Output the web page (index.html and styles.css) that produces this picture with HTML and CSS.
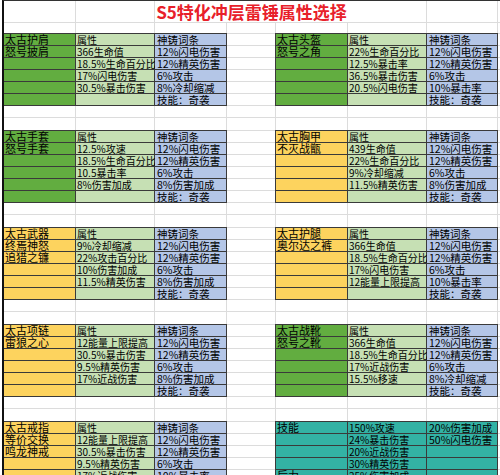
FILE: index.html
```html
<!DOCTYPE html>
<html lang="zh">
<head>
<meta charset="utf-8">
<title>S5特化冲层雷锤属性选择</title>
<link rel="stylesheet" href="styles.css">
</head>
<body>
<div class="sheet">
  <div class="row-title"><div class="title">S5特化冲层雷锤属性选择</div></div>
  <div class="row-blank"></div>

  <div class="band">
    <div class="blk">
      <div class="c a g">太古护肩</div><div class="c b">属性</div><div class="c d">神铸词条</div>
      <div class="c a g">怒号披肩</div><div class="c b">366生命值</div><div class="c d">12%闪电伤害</div>
      <div class="c a g"></div><div class="c b">18.5%生命百分比</div><div class="c d">12%精英伤害</div>
      <div class="c a g"></div><div class="c b">17%闪电伤害</div><div class="c d">6%攻击</div>
      <div class="c a g"></div><div class="c b">30.5%暴击伤害</div><div class="c d">8%冷却缩减</div>
      <div class="c a g"></div><div class="c b"></div><div class="c d">技能：奇袭</div>
    </div>
    <div class="blk right">
      <div class="c a g">太古头盔</div><div class="c b">属性</div><div class="c d">神铸词条</div>
      <div class="c a g">怒号之角</div><div class="c b">22%生命百分比</div><div class="c d">12%闪电伤害</div>
      <div class="c a g"></div><div class="c b">12.5%暴击率</div><div class="c d">12%精英伤害</div>
      <div class="c a g"></div><div class="c b">36.5%暴击伤害</div><div class="c d">6%攻击</div>
      <div class="c a g"></div><div class="c b">20.5%闪电伤害</div><div class="c d">10%暴击率</div>
      <div class="c a g"></div><div class="c b"></div><div class="c d">技能：奇袭</div>
    </div>
  </div>

  <div class="band">
    <div class="blk">
      <div class="c a g">太古手套</div><div class="c b">属性</div><div class="c d">神铸词条</div>
      <div class="c a g">怒号手套</div><div class="c b">12.5%攻速</div><div class="c d">12%闪电伤害</div>
      <div class="c a g"></div><div class="c b">18.5%生命百分比</div><div class="c d">12%精英伤害</div>
      <div class="c a g"></div><div class="c b">10.5暴击率</div><div class="c d">6%攻击</div>
      <div class="c a g"></div><div class="c b">8%伤害加成</div><div class="c d">8%伤害加成</div>
      <div class="c a g"></div><div class="c b"></div><div class="c d">技能：奇袭</div>
    </div>
    <div class="blk right">
      <div class="c a o">太古胸甲</div><div class="c b">属性</div><div class="c d">神铸词条</div>
      <div class="c a o">不灭战甑</div><div class="c b">439生命值</div><div class="c d">12%闪电伤害</div>
      <div class="c a o"></div><div class="c b">22%生命百分比</div><div class="c d">12%精英伤害</div>
      <div class="c a o"></div><div class="c b">9%冷却缩减</div><div class="c d">6%攻击</div>
      <div class="c a o"></div><div class="c b">11.5%精英伤害</div><div class="c d">8%伤害加成</div>
      <div class="c a o"></div><div class="c b"></div><div class="c d">技能：奇袭</div>
    </div>
  </div>

  <div class="band">
    <div class="blk">
      <div class="c a o">太古武器</div><div class="c b">属性</div><div class="c d">神铸词条</div>
      <div class="c a o">终焉神怒</div><div class="c b">9%冷却缩减</div><div class="c d">12%闪电伤害</div>
      <div class="c a o">追猎之镰</div><div class="c b">22%攻击百分比</div><div class="c d">12%精英伤害</div>
      <div class="c a o"></div><div class="c b">10%伤害加成</div><div class="c d">6%攻击</div>
      <div class="c a o"></div><div class="c b">11.5%精英伤害</div><div class="c d">8%伤害加成</div>
      <div class="c a o"></div><div class="c b"></div><div class="c d">技能：奇袭</div>
    </div>
    <div class="blk right">
      <div class="c a o">太古护腿</div><div class="c b">属性</div><div class="c d">神铸词条</div>
      <div class="c a o">奥尔达之裤</div><div class="c b">366生命值</div><div class="c d">12%闪电伤害</div>
      <div class="c a o"></div><div class="c b">18.5%生命百分比</div><div class="c d">12%精英伤害</div>
      <div class="c a o"></div><div class="c b">17%闪电伤害</div><div class="c d">6%攻击</div>
      <div class="c a o"></div><div class="c b">12能量上限提高</div><div class="c d">10%暴击率</div>
      <div class="c a o"></div><div class="c b"></div><div class="c d">技能：奇袭</div>
    </div>
  </div>

  <div class="band">
    <div class="blk">
      <div class="c a o">太古项链</div><div class="c b">属性</div><div class="c d">神铸词条</div>
      <div class="c a o">雷狼之心</div><div class="c b">12能量上限提高</div><div class="c d">12%闪电伤害</div>
      <div class="c a o"></div><div class="c b">30.5%暴击伤害</div><div class="c d">12%精英伤害</div>
      <div class="c a o"></div><div class="c b">9.5%精英伤害</div><div class="c d">6%攻击</div>
      <div class="c a o"></div><div class="c b">17%近战伤害</div><div class="c d">8%伤害加成</div>
      <div class="c a o"></div><div class="c b"></div><div class="c d">技能：奇袭</div>
    </div>
    <div class="blk right">
      <div class="c a g">太古战靴</div><div class="c b">属性</div><div class="c d">神铸词条</div>
      <div class="c a g">怒号之靴</div><div class="c b">366生命值</div><div class="c d">12%闪电伤害</div>
      <div class="c a g"></div><div class="c b">18.5%生命百分比</div><div class="c d">12%精英伤害</div>
      <div class="c a g"></div><div class="c b">17%近战伤害</div><div class="c d">6%攻击</div>
      <div class="c a g"></div><div class="c b">15.5%移速</div><div class="c d">8%冷却缩减</div>
      <div class="c a g"></div><div class="c b"></div><div class="c d">技能：奇袭</div>
    </div>
  </div>

  <div class="band">
    <div class="blk">
      <div class="c a o">太古戒指</div><div class="c b">属性</div><div class="c d">神铸词条</div>
      <div class="c a o">等价交换</div><div class="c b">12能量上限提高</div><div class="c d">12%闪电伤害</div>
      <div class="c a o">鸣龙神戒</div><div class="c b">30.5%暴击伤害</div><div class="c d">12%精英伤害</div>
      <div class="c a o"></div><div class="c b">9.5%精英伤害</div><div class="c d">6%攻击</div>
      <div class="c a o"></div><div class="c b">17%近战伤害</div><div class="c d">10%暴击率</div>
      <div class="c a o"></div><div class="c b"></div><div class="c d">技能：奇袭</div>
    </div>
    <div class="blk right">
      <div class="c a t">技能</div><div class="c b t">150%攻速</div><div class="c d t">20%伤害加成</div>
      <div class="c a t"></div><div class="c b t">24%暴击伤害</div><div class="c d t">50%闪电伤害</div>
      <div class="c a t"></div><div class="c b t">20%近战伤害</div><div class="c d t"></div>
      <div class="c a t"></div><div class="c b t">30%精英伤害</div><div class="c d t"></div>
      <div class="c a t">后力</div><div class="c b t">25%伤害加成</div><div class="c d t"></div>
      <div class="c a t"></div><div class="c b t"></div><div class="c d t"></div>
    </div>
  </div>
</div>
</body>
</html>
```

FILE: styles.css
```css
:root {
  --grid: #dcdcdc;
  --line: #3a3a3a;
  --dkgreen: #62ad40;
  --ltgreen: #c6e0b4;
  --blue: #b4c6e7;
  --orange: #fdd35e;
  --teal: #33b2a4;
}

html, body {
  margin: 0;
  padding: 0;
  background: #fff;
}

body {
  font-family: "Noto Sans CJK SC", "Noto Sans", sans-serif;
  color: #000;
  width: 500px;
  height: 475px;
  overflow: hidden;
}

.sheet {
  margin-left: 2px;
  width: 496px;
  height: 474px;
  overflow: hidden;
  border-left: 2px solid #111;
  border-top: 1px solid #333;
  background-image: linear-gradient(90deg,
    transparent 0 71px, var(--grid) 71px 72px,
    transparent 72px 150px, var(--grid) 150px 151px,
    transparent 151px 222px, var(--grid) 222px 223px,
    transparent 223px 271px, var(--grid) 271px 272px,
    transparent 272px 343px, var(--grid) 343px 344px,
    transparent 344px 422px, var(--grid) 422px 423px,
    transparent 423px 493px, var(--grid) 493px 494px,
    transparent 494px);
}

.row-title {
  display: grid;
  grid-template-columns: 72px 79px 72px 49px 72px 79px 71px;
  height: 22px;
  box-sizing: border-box;
  border-bottom: 1px solid var(--grid);
}

.title {
  grid-column: 3 / 6;
  background: #fff;
  display: flex;
  align-items: flex-end;
  justify-content: center;
  white-space: nowrap;
  font-size: 17px;
  line-height: 20px;
  font-weight: 700;
  color: #e8202a;
}

.row-blank {
  height: 11px;
  box-sizing: border-box;
  border-bottom: 1px solid var(--grid);
}

.band {
  display: grid;
  grid-template-columns: 223px 49px 222px;
  grid-template-rows: 72px 25px;
  background-image: linear-gradient(180deg,
    transparent 0 11px, var(--grid) 11px 12px,
    transparent 12px 23px, var(--grid) 23px 24px,
    transparent 24px 35px, var(--grid) 35px 36px,
    transparent 36px 47px, var(--grid) 47px 48px,
    transparent 48px 59px, var(--grid) 59px 60px,
    transparent 60px 71px, var(--grid) 71px 72px,
    transparent 72px 83px, var(--grid) 83px 84px,
    transparent 84px 96px, var(--grid) 96px 97px);
}

.blk {
  grid-column: 1;
  grid-row: 1;
  display: grid;
  grid-template-columns: 72px 79px 72px;
  grid-auto-rows: 12px;
  margin: -1px 0 0 -1px;
  border-top: 1px solid var(--line);
  border-left: 1px solid var(--line);
}

.blk.right {
  grid-column: 3;
  grid-template-columns: 72px 79px 71px;
}

.c {
  box-sizing: border-box;
  border-right: 1px solid var(--line);
  border-bottom: 1px solid var(--line);
  line-height: 11px;
  white-space: nowrap;
}

.a { padding-left: 1px; font-size: 11px; }
.b { padding-left: 1px; font-size: 10px; background: var(--ltgreen); }
.d { padding-left: 2px; font-size: 10.5px; background: var(--blue); }
.g { background: var(--dkgreen); }
.o { background: var(--orange); }
.t { background: var(--teal); }
```
